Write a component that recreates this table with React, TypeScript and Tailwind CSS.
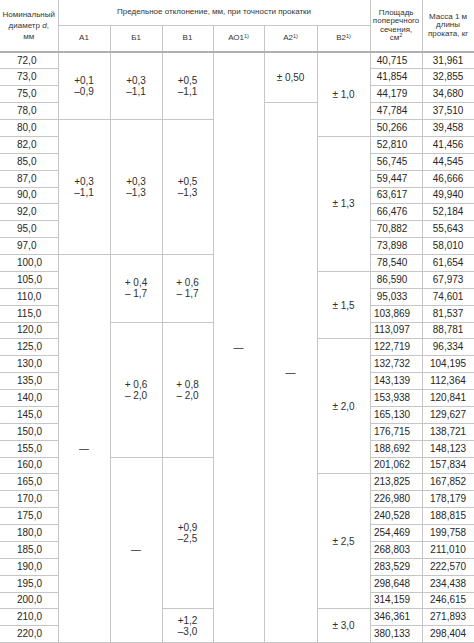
const rows: [string, string, string][] = [
  ['72,0', '40,715', '31,961'],
  ['73,0', '41,854', '32,855'],
  ['75,0', '44,179', '34,680'],
  ['78,0', '47,784', '37,510'],
  ['80,0', '50,266', '39,458'],
  ['82,0', '52,810', '41,456'],
  ['85,0', '56,745', '44,545'],
  ['87,0', '59,447', '46,666'],
  ['90,0', '63,617', '49,940'],
  ['92,0', '66,476', '52,184'],
  ['95,0', '70,882', '55,643'],
  ['97,0', '73,898', '58,010'],
  ['100,0', '78,540', '61,654'],
  ['105,0', '86,590', '67,973'],
  ['110,0', '95,033', '74,601'],
  ['115,0', '103,869', '81,537'],
  ['120,0', '113,097', '88,781'],
  ['125,0', '122,719', '96,334'],
  ['130,0', '132,732', '104,195'],
  ['135,0', '143,139', '112,364'],
  ['140,0', '153,938', '120,841'],
  ['145,0', '165,130', '129,627'],
  ['150,0', '176,715', '138,721'],
  ['155,0', '188,692', '148,123'],
  ['160,0', '201,062', '157,834'],
  ['165,0', '213,825', '167,852'],
  ['170,0', '226,980', '178,179'],
  ['175,0', '240,528', '188,815'],
  ['180,0', '254,469', '199,758'],
  ['185,0', '268,803', '211,010'],
  ['190,0', '283,529', '222,570'],
  ['195,0', '298,648', '234,438'],
  ['200,0', '314,159', '246,615'],
  ['210,0', '346,361', '271,893'],
  ['220,0', '380,133', '298,404'],
];

// [first row, row span, text] for each tolerance column; "|" splits the two lines
type Span = [number, number, string];

const tolerances: Span[][] = [
  // А1
  [[0, 4, '+0,1|–0,9'], [4, 8, '+0,3|–1,1'], [12, 23, '—']],
  // Б1
  [[0, 4, '+0,3|–1,1'], [4, 8, '+0,3|–1,3'], [12, 4, '+ 0,4|– 1,7'], [16, 8, '+ 0,6|– 2,0'], [24, 11, '—']],
  // В1
  [[0, 4, '+0,5|–1,1'], [4, 8, '+0,5|–1,3'], [12, 4, '+ 0,6|– 1,7'], [16, 8, '+ 0,8|– 2,0'], [24, 9, '+0,9|–2,5'], [33, 2, '+1,2|–3,0']],
  // АО1
  [[0, 35, '—']],
  // А2
  [[0, 3, '± 0,50'], [3, 32, '—']],
  // В2
  [[0, 5, '± 1,0'], [5, 8, '± 1,3'], [13, 4, '± 1,5'], [17, 8, '± 2,0'], [25, 8, '± 2,5'], [33, 2, '± 3,0']],
];

const cell = 'border border-[#c6c6c6] p-0 text-center align-middle';
const head = 'border-b-[2px] border-b-[#b0b0b0]';

function Tol({ text }: { text: string }) {
  const [a, b] = text.split('|');
  if (!b) return <>{a}</>;
  return (
    <>
      {a}
      <br />
      {b}
    </>
  );
}

export default function App() {
  return (
    <div className="w-[474px] h-[643px] overflow-hidden bg-white text-[#262626] font-['Liberation_Sans',Arial,sans-serif]">
      <table className="table-fixed border-collapse w-[474px]">
        <colgroup>
          <col className="w-[58px]" />
          <col className="w-[52px]" />
          <col className="w-[52px]" />
          <col className="w-[51px]" />
          <col className="w-[51px]" />
          <col className="w-[53px]" />
          <col className="w-[53px]" />
          <col className="w-[52px]" />
          <col className="w-[52px]" />
        </colgroup>
        <thead className="text-[8px] font-normal text-[#333]">
          <tr className="h-[25px]">
            <th rowSpan={2} className={`${cell} ${head} border-t-0 border-l-0 font-normal leading-[11px] whitespace-nowrap`}>
              Номинальный
              <br />
              диаметр <i>d</i>,
              <br />
              мм
            </th>
            <th colSpan={6} className={`${cell} border-t-0 font-normal whitespace-nowrap`}>
              Предельное отклонение, мм, при точности прокатки
            </th>
            <th rowSpan={2} className={`${cell} ${head} border-t-0 font-normal leading-[8.5px] whitespace-nowrap`}>
              Площадь
              <br />
              поперечного
              <br />
              сечения,
              <br />
              см<sup className="text-[5.5px]">2</sup>
            </th>
            <th rowSpan={2} className={`${cell} ${head} border-t-0 font-normal leading-[8.5px] whitespace-nowrap`}>
              Масса 1 м
              <br />
              длины
              <br />
              проката, кг
            </th>
          </tr>
          <tr className="h-[27px]">
            <th className={`${cell} ${head} font-normal`}>А1</th>
            <th className={`${cell} ${head} font-normal`}>Б1</th>
            <th className={`${cell} ${head} font-normal`}>В1</th>
            <th className={`${cell} ${head} font-normal`}>
              АО1<sup className="text-[5.5px]">1)</sup>
            </th>
            <th className={`${cell} ${head} font-normal`}>
              А2<sup className="text-[5.5px]">1)</sup>
            </th>
            <th className={`${cell} ${head} font-normal`}>
              В2<sup className="text-[5.5px]">1)</sup>
            </th>
          </tr>
        </thead>
        <tbody className="text-[10px] leading-[10px]">
          {rows.map(([d, area, mass], i) => (
            <tr key={d} className="h-[16.88px]">
              <td className={`${cell} border-l-0 text-left pl-[17px]`}>{d}</td>
              {tolerances.map((col, c) =>
                col
                  .filter(([start]) => start === i)
                  .map(([start, span, text]) => (
                    <td key={`${c}-${start}`} rowSpan={span} className={`${cell} leading-[11px] text-[#2e2e2e]`}>
                      <Tol text={text} />
                    </td>
                  ))
              )}
              <td className={`${cell} pr-2`}>{area}</td>
              <td className={cell}>{mass}</td>
            </tr>
          ))}
        </tbody>
      </table>
    </div>
  );
}
